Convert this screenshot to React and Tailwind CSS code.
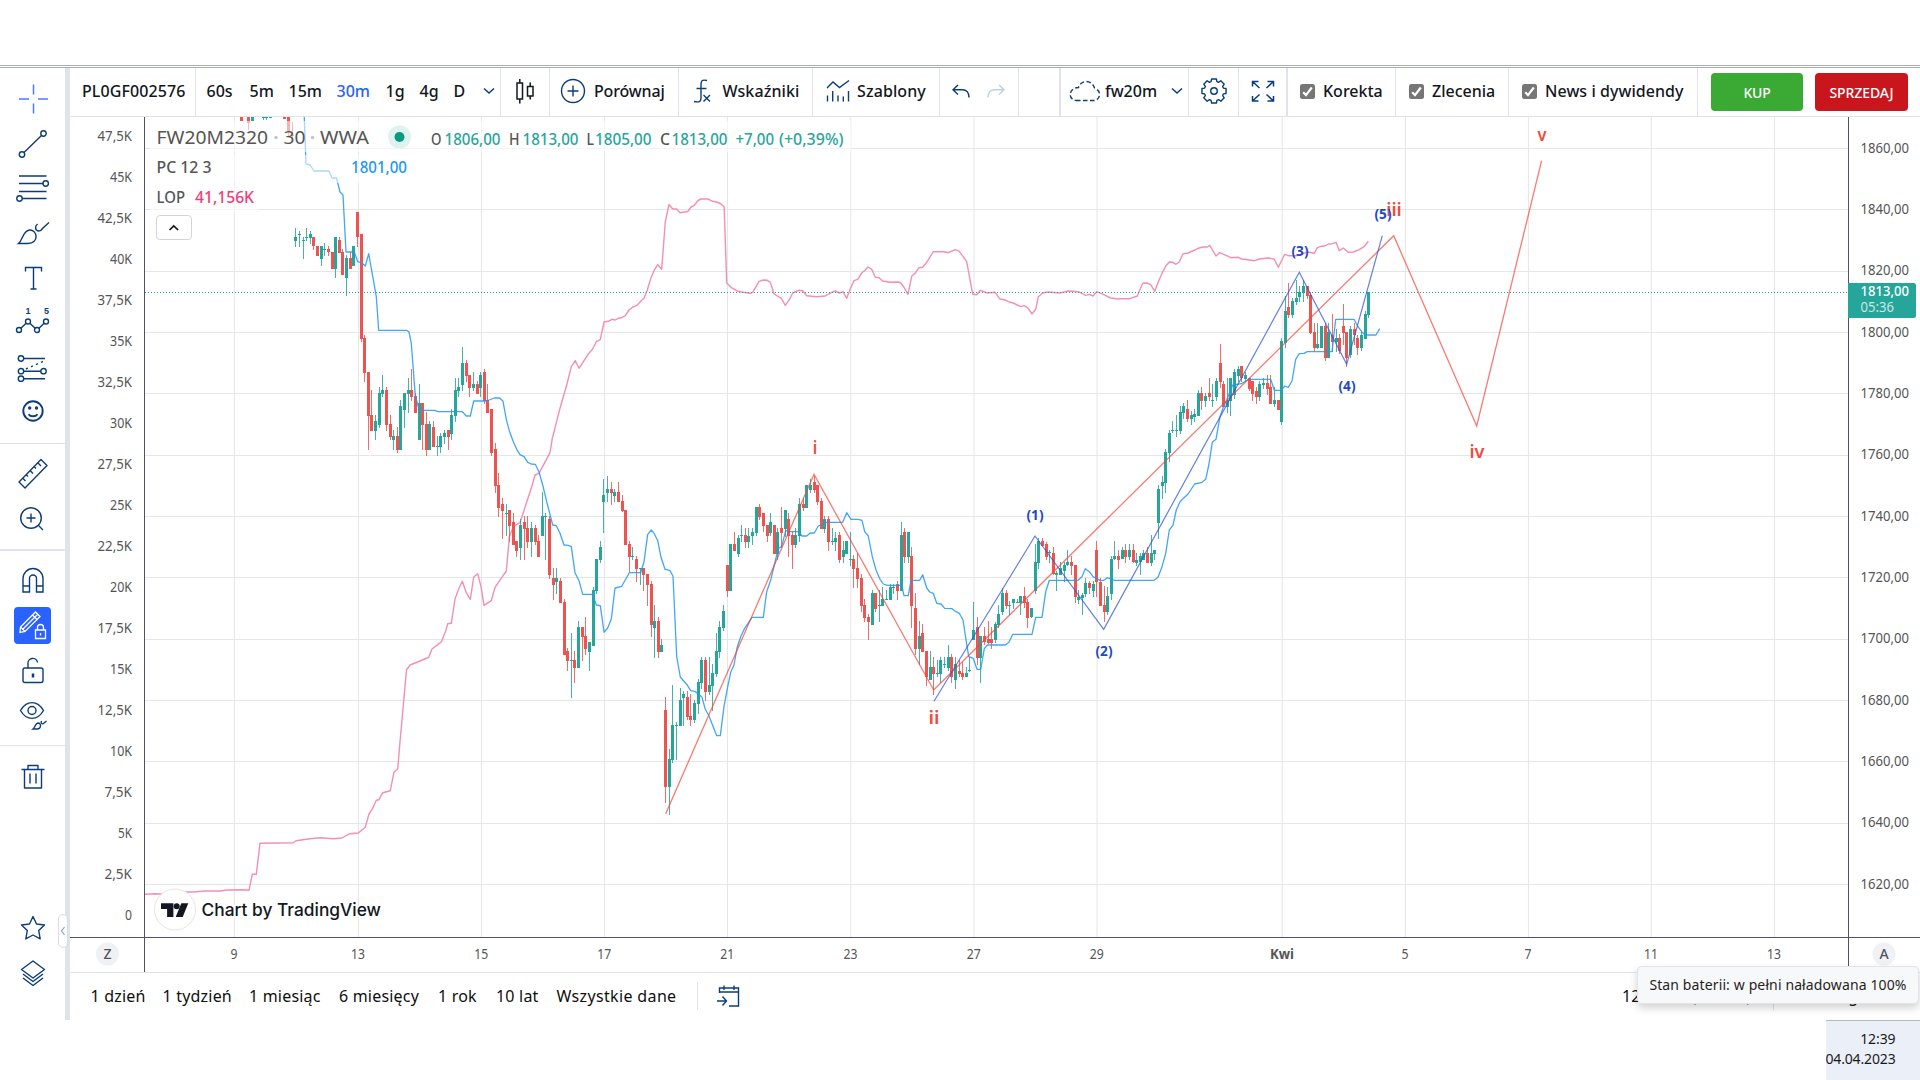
import { clsx } from "clsx";

const NAVY = "#0b3d7a";
const UP = "#26a69a";
const DOWN = "#ef5350";

// ---------- market data ----------
// Each block: first bar index, top edge in px, then "high,open/close top,open/close bottom,low,direction"
// with the y values in thirds of a pixel below the top edge.
const BLOCKS = [
  { from: 17, top: 50, bars: "534,561,573,590,g 543,552,555,590,g 560,570,573,627,g 534,561,564,573,g 543,552,564,582,g 561,561,588,600,r 588,588,618,618,r 588,588,627,648,g 580,597,600,618,g 588,597,606,618,r 606,606,657,657,r 561,561,657,684,g 561,570,608,608,r 597,606,675,675,r 615,624,684,737,g 606,624,657,657,r 588,588,648,648,g 486,486,561,590,r 552,552,866,875,r" },
  { from: 36, top: 230, bars: "315,324,429,456,r 426,426,557,660,r 480,555,602,602,r 555,573,602,629,g 471,489,585,593,g 435,480,491,500,g 471,480,585,602,r 555,582,620,629,r 600,618,629,660,g 591,618,660,668,r 510,528,660,660,g 489,489,540,593,g 444,480,491,549,g 417,480,500,513,r 489,498,549,549,r 462,519,629,629,g 519,519,585,660,r 546,582,660,678,r 573,582,660,660,g 573,591,650,650,r 618,648,651,678,g 609,618,650,668,g 600,609,620,642,g 600,600,620,660,r 537,555,611,629,g 444,480,557,575,g 444,471,482,500,g 351,399,465,482,g 390,399,438,456,r 435,435,474,500,r 426,462,474,482,g 453,462,491,491,r 426,435,474,500,g 417,426,513,522,r 462,510,549,549,r 537,537,669,678,r 639,657,768,789,r 729,765,834,861,r 804,822,843,927,r 822,849,852,918,g 840,840,888,936,r 849,876,945,945,r 933,933,963,981,r 867,885,954,990,g 858,876,897,990,r 858,894,936,954,r 876,894,936,981,g 885,894,936,945,r 915,933,981,981,r 786,858,918,918,g 849,858,861,990,g 858,867,1035,1047,r 1014,1044,1065,1110,r 1014,1044,1056,1092,g 1044,1053,1119,1119,r" },
  { from: 91, top: 440, bars: "477,487,645,645,r 624,633,663,693,r 579,660,663,774,g 633,660,684,729,r 543,561,684,684,g 561,561,591,663,r 531,588,627,645,r 606,606,636,693,g 441,450,618,618,g 357,357,453,462,g 303,321,360,370,g 117,165,186,279,g 108,147,159,186,g 126,147,159,195,r 147,156,168,186,g 126,156,186,186,r 165,183,213,216,r 210,210,315,315,r 303,312,351,396,r 321,348,351,360,g 348,357,387,426,r 384,384,387,435,g 384,384,405,453,r 402,402,435,498,r 423,432,555,591,r 495,543,564,654,g 531,543,636,654,r 597,615,636,636,g 771,810,1041,1089,r 927,957,1041,1125,g 735,855,960,969,g 846,855,858,960,g 744,780,858,858,g 753,762,774,858,g 753,771,831,840,r 762,828,840,858,r 780,789,840,849,g 717,726,792,822,g 651,660,729,747,g 651,660,756,783,r 651,735,756,765,g 672,699,738,813,g 579,633,702,711,g 543,561,636,654,g 495,513,564,573,g 375,375,453,471,r 312,312,453,453,g 276,312,333,333,r 285,294,342,351,g 255,285,288,306,g 264,285,306,324,r 264,288,306,324,g 264,276,288,315,g 201,201,279,288,g 192,201,231,240,r 219,219,258,276,r 255,255,288,306,r 219,246,279,288,g 255,255,342,342,r 264,276,342,360,g 201,264,279,324,r 210,210,267,291,g 219,237,288,351,r 276,285,315,387,r 264,285,315,324,g 174,192,288,306,g 174,192,204,213,r 135,135,204,204,g 117,135,150,159,g 108,126,150,159,r 135,135,186,195,r 174,183,267,267,r 228,237,267,279,g 228,237,306,333,r 264,303,306,315,g 276,294,306,333,g 276,285,360,369,r 303,330,351,369,g 303,303,342,342,g 276,357,360,378,g 345,357,387,444,r 339,384,417,444,r 402,414,498,516,r 477,495,534,546,r 522,531,546,600,r 450,459,555,555,g 459,459,507,516,r 450,495,498,546,g 441,477,498,498,g 450,477,480,480,g 432,441,480,480,g 432,441,444,462,g 423,432,453,480,r 246,285,453,453,g 264,276,351,369,r 276,276,351,369,g 321,348,498,564,r 459,504,627,645,r 543,588,627,675,g 552,579,636,636,r 633,633,711,738,r 633,681,720,720,g 651,681,702,765,r 660,699,702,711,g 651,660,702,729,g 651,672,675,684,g 615,651,684,693,g 642,651,711,729,r 651,672,720,747,g" },
  { from: 200, top: 460, bars: "600,633,642,651,r 605,640,651,660,r 620,640,651,651,g 590,630,633,635,g 426,510,540,540,g 471,501,594,614,r 528,528,594,669,g 501,528,545,555,r 483,537,548,552,r 501,537,549,567,r 486,492,540,549,g 435,462,495,504,g 384,399,456,465,g 390,399,438,447,r 423,435,438,465,g 417,417,429,447,g 417,426,429,429,g 408,408,429,465,g 381,408,429,445,r 417,426,474,504,r 444,444,471,474,g 252,306,393,402,g 234,243,309,327,g 234,243,258,258,r 246,252,291,300,r 270,276,280,309,g 261,279,342,345,r 333,340,344,393,g 306,324,345,345,g 306,315,333,366,g 270,306,315,318,g 288,306,318,345,r 315,315,411,429,r 390,411,420,432,g 399,405,414,465,g 354,369,402,411,g 363,369,384,402,r 363,372,393,411,g 243,270,366,411,r 354,366,438,438,r 378,435,456,486,r 381,408,456,465,g 288,297,402,420,g 243,288,297,300,g 270,288,300,327,r 261,270,297,297,g 252,270,291,309,r 252,270,291,300,g 252,270,306,309,r 279,300,309,318,g 279,288,306,345,g 270,279,300,300,g 261,279,309,309,r 225,279,309,318,g 270,270,282,300,g 75,87,189,237,g 48,66,78,117,g" },
  { from: 257, top: 200, bars: "747,756,849,879,g 690,699,759,786,g 663,690,693,699,g 645,690,693,711,g 618,636,693,702,g 609,618,639,657,g 600,627,657,666,r 633,645,657,675,g 627,642,651,666,g 570,579,648,648,g 561,579,603,630,r 579,588,603,621,g 534,579,591,603,r 552,600,603,621,g 534,543,591,603,g 432,489,546,564,r 543,552,621,621,r 534,600,621,639,g 534,534,603,648,g 507,516,585,597,g 498,507,528,546,g 498,498,534,546,r 516,525,537,546,g 534,534,567,573,r 543,543,582,603,r 561,573,591,612,r 543,552,591,603,g 534,549,555,567,g 525,549,567,585,r 525,561,612,612,r 561,600,612,621,g 600,600,630,630,r 414,423,666,675,g 288,333,429,444,g 249,321,345,354,r 294,303,345,354,g 240,294,306,315,g 258,276,291,306,g 240,258,279,306,g 258,258,288,297,r 276,285,399,402,r 369,396,444,453,r 369,432,444,447,g 378,378,444,444,g 369,378,474,483,r 369,396,474,474,g 342,405,426,456,r 387,414,426,456,g 402,414,453,462,r 312,378,399,435,r 396,396,474,501,r 378,387,465,474,g 369,387,405,435,r 405,414,444,465,r 396,405,444,453,g 333,342,417,417,g 276,276,345,354,g" },
];

// bars cut by the top edge of the pane
const CUT_BARS = [
  [2, 112, 112, 121, 121, "r"], [4, 112, 112, 123, 130, "r"], [5, 112, 112, 121, 121, "g"], [8, 112, 112, 118, 120, "g"],
  [9, 112, 112, 118, 120, "g"], [10, 112, 112, 118, 118, "g"], [14, 112, 112, 119, 119, "r"], [15, 112, 112, 131, 137, "r"], [16, 122, 135, 135, 137, "r"],
];

const BARS = [
  ...CUT_BARS,
  ...BLOCKS.flatMap(b =>
    b.bars.split(" ").map((row, i) => {
      const [h, t, bt, l, dir] = row.split(",");
      return [b.from + i, b.top + h / 3, b.top + t / 3, b.top + bt / 3, b.top + l / 3, dir];
    })
  ),
];

const line = (x0, y0, pts, k = 3) =>
  pts.split(" ").map(p => {
    const [x, y] = p.split(",");
    return `${(x0 + x / k).toFixed(1)},${(y0 + y / k).toFixed(1)}`;
  }).join(" ");

const CHANNEL = [
  line(0, 0, "304,110 306,164 310,165 314,171 329,171 332,178 336.5,178 338,184 340,192 343,195 346,252", 1),
  line(340, 230, "19,66 43,66 53,95 65,98 76,108 86,71 109,200 116,301 200,301 207,306 214,340 226,498 238,541 284,541 294,545 367,545 379,558 391,558 401,513 440,513 463,504 479,504 489,514 499,568 508,602 520,635 530,658 540,674 552,680 563,697 574,702 586,703 597,726 608,765 620,815 638,885 649,887 660,910 672,945 685,946 694,950 705,1028 717,1052 728,1093 758,1093 769,1125 781,1127 792,1206"),
  line(540, 440, "192,577 203,564 214,537 225,444 245,439 268,398 302,398 312,365 323,283 334,270 343,281 353,302 363,352 375,388 389,391 399,408 410,650 421,711 441,734 452,752 464,754 476,763 486,772 496,808 506,826 530,887 541,887 552,800 563,740 572,697 582,675 592,620 603,588 614,565 636,532 670,532 680,455 692,420 703,375 715,325 725,320 737,271 746,275 776,275 786,288 800,288 811,279 823,279 835,258 850,252 860,247 908,247 920,218 933,238 955,238 966,241 974,275 985,288 997,350 1008,390 1020,418 1030,432 1042,436 1085,436 1092,467 1105,467 1113,421 1139,421 1148,404 1160,444 1169,456 1180,460 1190,490 1203,492 1214,505 1236,506 1248,515 1258,520"),
  line(880, 460, "249,480 259,545 266,590 280,595 291,628 302,628 313,566 322,555 376,555 387,547 398,523 456,523 467,472 486,472 497,395 508,361 594,361 606,350 616,326 628,335 639,350 660,361 672,361 682,353 704,361 822,361 834,352 846,320 857,280 868,210"),
  line(1120, 200, "148,990 159,976 169,930 180,905 192,893 204,882 224,852 246,847 257,838 267,792 277,727 288,718 300,650 310,622 320,600 338,555 364,551 386,538 452,538 463,571 484,571 494,558 505,562 516,543 527,478 538,461 552,460 562,455 636,455 647,358 702,358 714,380 725,395 735,405 768,405 779,386"),
].join(" ");

const OPEN_INTEREST = [
  line(0, 560, "435,1003 465,1001 495,1003 560,996 580,996 615,993 660,993 680,990 730,989 747,991 757,943 769,943 780,850 880,848 888,842 930,836 960,833 1000,836 1025,834 1050,821 1075,819 1096,802 1107,762 1118,745 1129,721 1137,719 1148,698 1171,692 1182,636 1193,627 1200,545"),
  line(0, 0, "406.5,670 410,665 428.6,657.5 432,649 441.6,641.6", 1),
  line(340, 230, "318,1200 323,1181 334,1180 345,1107 356,1076 367,1054 379,1088 391,1108 401,1041 413,1031 423,1070 432,1126 454,1112 465,1072 499,1023 508,920 520,890 540,878 575,770 585,735 597,730 630,668 637,625 660,535 680,465 694,410 706,392 717,415 745,372 758,357 769,335 781,329 792,276 805,274 816,268 826,270 835,265 845,263 856,257 867,240 878,231 890,227 902,214 912,205 922,180 932,146 942,122 953,104 965,118"),
  line(0, 0, "665.3,221.7 669,204.5 672.7,209 676.7,209 680,212.7 687.8,211.5 691,207 694,205.5 698,200.5 701,199 708,199 712.6,201.3 716.7,202 721,204 724.2,207", 1),
  line(720, 235, "20,144 33,157 50,167 65,171 90,175 98,172 117,139 130,135 142,136 151,142 162,177 184,190 196,211 208,194 218,174 236,166 248,167 260,182 290,185 316,183 333,173 346,168 358,174 369,170 380,190 392,158 402,137 413,133 425,114 435,106 444,96 455,103 466,127 477,128 488,138 510,142 535,141 542,144 552,157 564,178 575,124 586,114 597,98 608,97 620,82 640,50 672,50 685,53 706,44 718,49 740,80 758,178 770,179 781,166 802,174 825,172 839,191 858,196 868,201 880,204 902,215 912,212 923,218 936,237 947,223 955,185 968,174 985,171 1020,174 1045,168 1075,170 1097,181 1108,178 1119,183 1130,170 1150,178 1172,189 1195,192"),
  line(1120, 200, "0,296 30,296 52,288 68,250 80,249 92,254 104,274 115,245 126,220 138,197 148,186 158,187 168,193 178,186 189,161 205,159 235,145 250,141 262,141 269,136 288,168 298,158 320,167 332,173 355,172 365,177 405,182 418,177 445,174 463,178 475,202 494,163 505,167 530,167 537,165 562,156 583,160 592,143 603,139 615,138 625,132 637,131 648,127 658,152 670,144 684,157 700,156 718,149 732,140 745,124"),
].join(" ");

const DATES = [
  [234.4, "9"], [358.4, "13"], [481.5, "15"], [604.6, "17"], [727.5, "21"], [850.8, "23"], [974, "27"], [1097, "29"],
  [1282.2, "Kwi"], [1405.4, "5"], [1528.4, "7"], [1651.3, "11"], [1774.4, "13"],
];
const PRICES = [1860, 1840, 1820, 1800, 1780, 1760, 1740, 1720, 1700, 1680, 1660, 1640, 1620];
const VOLUMES = ["47,5K", "45K", "42,5K", "40K", "37,5K", "35K", "32,5K", "30K", "27,5K", "25K", "22,5K", "20K", "17,5K", "15K", "12,5K", "10K", "7,5K", "5K", "2,5K", "0"];
const VOLUME_W = { 1: 7, 2: 14, 3: 22, 4: 27.5, 5: 34.5 };

const WAVES_RED = [[815, 454, "i", 4.5], [934, 724, "ii", 11], [1394, 215.5, "iii", 15.5], [1477, 458, "iv", 15], [1542, 140.5, "v", 9]];
const WAVES_BLUE = [[1035, 520, "(1)"], [1104, 656, "(2)"], [1300, 256, "(3)"], [1347, 391, "(4)"], [1383, 219, "(5)"]];

const LEGEND = [
  [156.5, 144, 111.5, "FW20M2320", "#555", 18.5], [283.5, 144, 22, "30", "#555", 18.5], [320, 144, 49, "WWA", "#555", 18.5],
  [431, 145, 10.5, "O", "#555", 15.5], [444.5, 145, 56, "1806,00", UP, 15.5],
  [509, 145, 10.5, "H", "#555", 15.5], [522.5, 145, 56, "1813,00", UP, 15.5],
  [586.5, 145, 7.5, "L", "#555", 15.5], [595, 145, 56.5, "1805,00", UP, 15.5],
  [660, 145, 10, "C", "#555", 15.5], [671.5, 145, 56, "1813,00", UP, 15.5],
  [735.5, 145, 38.5, "+7,00", UP, 15.5], [779, 145, 64.5, "(+0,39%)", UP, 15.5],
  [156.5, 173, 55, "PC 12 3", "#555", 15.5], [351, 173, 56, "1801,00", "#2196f3", 15.5],
  [156.5, 203, 28.5, "LOP", "#555", 15.5], [195, 203, 59, "41,156K", "#ec407a", 15.5],
];

const T = ({ w, children, ...rest }) => (
  <text textLength={w} lengthAdjust="spacingAndGlyphs" {...rest}>{children}</text>
);

const yOf = p => 148.5 + (1860 - p) * 3.0667;

function Chart() {
  return (
    <svg width="1850" height="855" viewBox="70 117 1850 855" className="block shrink-0 font-['Noto_Sans',sans-serif]">
      <g stroke="#e6e6e6">
        {DATES.map(([x]) => <line key={x} x1={x} x2={x} y1="117" y2="937" />)}
        {PRICES.map(p => <line key={p} y1={Math.floor(yOf(p)) + 0.5} y2={Math.floor(yOf(p)) + 0.5} x1="145" x2="1848" />)}
      </g>
      <polyline points={OPEN_INTEREST} fill="none" stroke="#f48fb1" strokeWidth="1.4" strokeLinejoin="round" />
      <g shapeRendering="crispEdges">
        {BARS.map(([i, h, t, b, l, dir]) => {
          const x = Math.floor(234.2 + i * 3.6245);
          const fill = dir === "g" ? UP : DOWN;
          return (
            <g key={i} fill={fill}>
              <rect x={x} y={Math.round(h)} width="1" height={Math.max(1, Math.round(l) - Math.round(h))} fillOpacity="0.85" />
              <rect x={x - 1} y={Math.round(t)} width="3" height={Math.max(1, Math.round(b) - Math.round(t))} />
            </g>
          );
        })}
      </g>
      <polyline points={CHANNEL} fill="none" stroke="#2196f3" strokeWidth="1.3" strokeOpacity="0.85" strokeLinejoin="round" />
      <line x1="145" x2="1848" y1="292.5" y2="292.5" stroke={UP} strokeDasharray="1 2" />

      <polyline points="665.7,813.7 814,474.3 933.7,690 1393.7,235.7 1476.7,426 1541.6,160.7" fill="none" stroke="#f44336" strokeOpacity="0.7" strokeWidth="1.3" />
      <polyline points="934,701.3 1035,536 1103.7,629.3 1299.3,272.3 1346.7,364.3 1382.3,235.7" fill="none" stroke="#2f55d4" strokeOpacity="0.75" strokeWidth="1.2" />
      <g fill="#f04a40" fontSize="18" fontWeight="600" textAnchor="middle">
        {WAVES_RED.map(([x, y, s, w]) => <T key={s} x={x} y={y} w={w}>{s}</T>)}
      </g>
      <g fill="#2148cc" fontSize="14" fontWeight="700" textAnchor="middle">
        {WAVES_BLUE.map(([x, y, s]) => <T key={s} x={x} y={y} w={17}>{s}</T>)}
      </g>

      {/* legend */}
      <g fill="#fff" fillOpacity="0.55">
        <rect x="150" y="121" width="701" height="31" />
        <rect x="150" y="155" width="264" height="28" />
        <rect x="150" y="185" width="108" height="28" />
      </g>
      {LEGEND.map(([x, y, w, s, c, size]) => (
        <T key={x + "-" + y} x={x} y={y} w={w} fill={c} fontSize={size} fontWeight={size > 16 ? 400 : 500}>{s}</T>
      ))}
      <circle cx="276" cy="137.5" r="1.7" fill="#c1c4cd" />
      <circle cx="312.5" cy="137.5" r="1.7" fill="#c1c4cd" />
      <circle cx="399.5" cy="137" r="11.5" fill="#dff2ef" />
      <circle cx="399.5" cy="137" r="5" fill="#089981" />
      <rect x="156.5" y="215.5" width="35" height="24" rx="3.5" fill="#fff" stroke="#d1d4dc" />
      <path d="M169.5 230l4.300 -4l4.300 4" fill="none" stroke="#131722" strokeWidth="1.7" />

      {/* attribution */}
      <circle cx="175" cy="909.5" r="20.5" fill="#fff" stroke="#e6e6e6" />
      <path d="M161 903.3h12.4v13.8h-6.3v-8h-6.1z M181.3 903.3h7l-5.6 13.8h-7z" fill="#131722" />
      <circle cx="176.7" cy="906.2" r="3" fill="#131722" />
      <T x="201.5" y="916.3" w="179.5" fontSize="17.5" fontWeight="500" fill="#131722" stroke="#fff" strokeWidth="3" paintOrder="stroke" className="font-[Inter,sans-serif]">Chart by TradingView</T>

      {/* axes */}
      <g stroke="#50535e" shapeRendering="crispEdges">
        <line x1="70" x2="1920" y1="937.5" y2="937.5" />
        <line x1="144.5" x2="144.5" y1="117" y2="972" />
        <line x1="1848.5" x2="1848.5" y1="117" y2="972" />
      </g>
      <g fill="#555" fontSize="14">
        {VOLUMES.map((v, i) => <T key={v} x="132" y={141 + i * 41} w={VOLUME_W[v.length]} textAnchor="end">{v}</T>)}
        {PRICES.map(p => <T key={p} x="1860.5" y={yOf(p) + 4} w="48.5">{p},00</T>)}
        {DATES.map(([x, s]) => (
          <T key={x} x={x - 0.3} y="959" textAnchor="middle" w={s.length === 3 ? 24 : s.length * 7} fontWeight={s.length === 3 ? 700 : 400}>{s}</T>
        ))}
      </g>
      <path d="M1848 283h65.500a2.500 2.500 0 0 1 2.500 2.500v30a2.500 2.500 0 0 1 -2.500 2.500h-65.500z" fill={UP} />
      <T x="1860.5" y="296.3" w="48.5" fontSize="14" fontWeight="500" fill="#fff">1813,00</T>
      <T x="1860.5" y="312.3" w="33.5" fontSize="14" fill="#fff" fillOpacity="0.75">05:36</T>
      <circle cx="107.5" cy="954" r="11.5" fill="#f0f1f5" />
      <circle cx="1884" cy="954" r="11.5" fill="#f0f1f5" />
      <g fill="#50535e" fontSize="14" fontWeight="500" textAnchor="middle">
        <text x="107.5" y="959">Z</text>
        <text x="1884" y="959">A</text>
      </g>
    </svg>
  );
}

// ---------- icons ----------
const Icon = ({ children, className, w = 36, h = 36, sw = 1.4, color = NAVY }) => (
  <svg width={w} height={h} viewBox={`${-w / 2} ${-h / 2} ${w} ${h}`} fill="none" stroke={color} strokeWidth={sw} className={clsx("shrink-0 overflow-visible", className)}>
    {children}
  </svg>
);

const Dot = ({ x, y, r = 2.7 }) => <circle cx={x} cy={y} r={r} fill="#fff" />;
const Chevron = ({ className }) => <Icon w={12} h={8} sw={1.5} className={className}><path d="M-5 -2.500 L0 2 L5 -2.500" /></Icon>;

const GEAR = Array.from({ length: 8 }, (_, i) => {
  const a = (i * Math.PI) / 4;
  return [[-0.3, 9.8], [-0.2, 12.3], [0.2, 12.3], [0.3, 9.8]].map(([d, r]) => `${(r * Math.sin(a + d)).toFixed(2)},${(-r * Math.cos(a + d)).toFixed(2)}`).join(" ");
}).join(" ");

const TOOLS_A = [
  <Icon color="#4d7bff" sw={1.5}><path d="M0.500 -14.500V-4.500M0.500 4.500V14.500M-14 0H-4M5 0H15" /></Icon>,
  <Icon><path d="M-9 8.500 L8.500 -8.500" /><Dot x={-11} y={10.5} /><Dot x={10.5} y={-10.5} /></Icon>,
  <Icon><path d="M-14 -12H13.500M-14 -4.500H12M-14 3.500H13.500M-12 10.500H13.500" /><Dot x={12.7} y={-4.5} /><Dot x={-13.5} y={10.5} /></Icon>,
  <Icon><path d="M-14.500 10.500C-10 7 -10.500 -2 -3.500 -3C4.500 -3.500 6.500 10.500 -5 10.500ZM4.500 -9C1.500 -6.500 2 -2 6 -2C8 -2 9 -3.500 10 -5L16 -10.500" /></Icon>,
  <Icon><path d="M-7.500 -6.500V-10.500H8.500V-6.500M0.500 -10.500V11M-2.500 11H3.500" /></Icon>,
  <Icon>
    <path d="M-14 8L-5 -0.500L4 8L13 -0.500" /><Dot x={-14} y={8} r={2.5} /><Dot x={-5} y={-0.5} r={2.5} /><Dot x={4} y={8} r={2.5} /><Dot x={13} y={-0.5} r={2.5} />
    <g fill={NAVY} stroke="none" fontSize="9" fontWeight="700" textAnchor="middle" className="font-['Liberation_Sans',sans-serif]"><text x="-5" y="-8">1</text><text x="13.5" y="-8">5</text></g>
  </Icon>,
  <Icon><path d="M-12 -8.500H12M-12 4.200H9M-12 11.700H12" /><path d="M-7 2L11 -6" strokeDasharray="2 3.5" /><Dot x={-12} y={-8.5} /><Dot x={-12} y={4.2} /><Dot x={10.5} y={4.2} /><Dot x={-12} y={11.7} /></Icon>,
  <Icon sw={1.9}><circle r="9.7" /><path d="M-4.500 3.200C-2.500 6 2.500 6 4.500 3.200" /><g fill={NAVY} stroke="none"><circle cx="-3.3" cy="-3" r="1.7" /><circle cx="3.5" cy="-3" r="1.7" /></g></Icon>,
];

const TOOLS_B = [
  <Icon><path d="M8 -14.500L14 -8.500L-8 14L-14 8ZM5 -11L8 -8M1 -7.500L3 -5.500M-3 -3.500L0 -0.500M-7 0.500L-5 2.500M-10.500 4L-7.500 7" strokeLinejoin="round" /></Icon>,
  <Icon><circle cx="-2" cy="-1" r="10.3" /><path d="M-6.500 -1H2.500M-2 -5.500V3.500M5 6L10 11" /></Icon>,
];

const TOOLS_C = [
  <Icon><path d="M-10 11V-2.500A10 10 0 0 1 10 -2.500V11H3.500V-2.500A3.500 3.500 0 0 0 -3.500 -2.500V11ZM-10 5H-3.500M3.500 5H10" /></Icon>,
  <span className="flex h-[37px] w-[37px] items-center justify-center rounded-[4px] bg-[#2962ff]">
    <Icon color="#fff" sw={1.3}>
      <path d="M-13 6.500L-12.500 1L2.500 -14L7 -9.500L-8 5.500ZM-0.500 -11L4 -6.500M-12.500 1L-8 5.500M-10 3L4.500 -11.500" />
      <path d="M2.500 4V12.500H12.500V4ZM4.500 4V1.500A3 3 0 0 1 10.500 1.500V4M7.500 7V9.500" />
    </Icon>
  </span>,
  <Icon><rect x="-10" y="-2" width="20" height="14.5" rx="2" /><path d="M-5 -2V-6A4.700 4.700 0 0 1 4.500 -7.500" /><path d="M0 3.500V7.500" strokeWidth="2.5" /></Icon>,
  <Icon><path d="M-12.500 -4.500C-6.500 -15 4.500 -15 10.500 -4.500C4.500 6 -6.500 6 -12.500 -4.500Z" /><circle cx="-1" cy="-4.5" r="4" /><path d="M0 14C2.500 12 2 8.500 5 8C8.500 8 8.500 14 4 14ZM8.500 6C7.500 8 9 9.500 10.500 8.500L13.500 6" /></Icon>,
];

const Trash = <Icon><path d="M-11.500 -7.500H11.500M-5 -7.500V-11.500H5V-7.500M-8.500 -7.500V11H8.500V-7.500M-3 -3.500V6.500M3 -3.500V6.500" strokeLinejoin="round" /></Icon>;
const Star = <Icon><path d="M0 -11.500L3.500 -4L11.500 -3L5.700 2.500L7.200 10.800L0 7L-7.200 10.800L-5.700 2.500L-11.500 -3L-3.500 -4Z" strokeLinejoin="round" /></Icon>;
const Layers = <Icon><path d="M0 -12L11.500 -3.500L0 5L-11.500 -3.500ZM-10 1L0 8.500L10 1M-10 5L0 12.500L10 5" strokeLinejoin="round" /></Icon>;

const Tool = ({ children }) => <button className="flex h-[44.6px] w-[65px] shrink-0 items-center justify-center">{children}</button>;

function Sidebar() {
  return (
    <aside className="flex w-[65px] shrink-0 flex-col bg-white pt-[9px]">
      {TOOLS_A.map((t, i) => <Tool key={i}>{t}</Tool>)}
      <div className="mt-[9px] mb-[8px] h-px bg-[#e0e3eb]" />
      {TOOLS_B.map((t, i) => <Tool key={i}>{t}</Tool>)}
      <div className="mt-[8px] mb-[8px] h-[2px] bg-[#e0e3eb]" />
      {TOOLS_C.map((t, i) => <Tool key={i}>{t}</Tool>)}
      <div className="mt-[8px] mb-[8px] h-px bg-[#e0e3eb]" />
      <Tool>{Trash}</Tool>
      <div className="mt-auto mb-[25px]">
        <Tool>{Star}</Tool>
        <Tool>{Layers}</Tool>
      </div>
    </aside>
  );
}

const Cell = ({ className, children }) => (
  <div className={clsx("flex h-full shrink-0 items-center border-r border-[#e0e3eb] pb-[2px] whitespace-nowrap", className)}>{children}</div>
);

const Check = ({ className, label }) => (
  <label className={clsx("flex items-center", className)}>
    <span className="mr-[8px] flex h-[15px] w-[15px] items-center justify-center rounded-[2.5px] bg-[#767676]">
      <Icon w={13} h={13} color="#fff" sw={2.2}><path d="M-4.300 0.800L-1.500 3.600L4.300 -4" /></Icon>
    </span>
    {label}
  </label>
);

function TopBar() {
  return (
    <header className="flex h-[49px] shrink-0 items-center border-b border-[#e0e3eb] text-[16px] font-medium text-[#131722]">
      <Cell className="w-[126px] pl-[12px]"><span className="w-[102.5px] overflow-hidden tracking-[0.1px]">PL0GF002576</span></Cell>
      <Cell className="w-[305px] pl-[10.5px]">
        <span className="w-[43px]">60s</span>
        <span className="w-[39px]">5m</span>
        <span className="w-[48px]">15m</span>
        <span className="w-[49px] text-[#2962ff]">30m</span>
        <span className="w-[34px]">1g</span>
        <span className="w-[34px]">4g</span>
        <span className="w-[29px]">D</span>
        <Chevron />
      </Cell>
      <Cell className="w-[49px] justify-center">
        <Icon w={20} h={28} color="#131722" sw={1.5}><path d="M-8 -8H-2.500V8H-8ZM-5.200 -12V-8M-5.200 8V12.500M2.500 -4.500H8V5H2.500ZM5.200 -8.500V-4.500M5.200 5V8.500" /></Icon>
      </Cell>
      <Cell className="w-[129px] pl-[10px]">
        <Icon w={26} h={26}><circle r="11.5" /><path d="M-5.500 0H5.500M0 -5.500V5.500" /></Icon>
        <span className="ml-[8px] tracking-[-0.15px]">Porównaj</span>
      </Cell>
      <Cell className="w-[134px] pl-[14px]">
        <Icon w={18} h={26}><path d="M5 -10.500C-1 -12 -1 -9 -1 -6V7C-1 11 -3 11.500 -8 10.500M-5.500 -2.500H4.500M1.500 4L8 10.500M8 4L1.500 10.500" /></Icon>
        <span className="ml-[11.5px] tracking-[0.1px]">Wskaźniki</span>
      </Cell>
      <Cell className="w-[127px] pl-[12.5px]">
        <Icon w={24} h={26}><path d="M-11 -3L-5 -9L1.500 -3.500L11 -10.500M-10.500 4.500V10.500M-5.300 0V10.500M0 4.500V10.500M5.300 5.500V10.500M10.500 0V10.500" /></Icon>
        <span className="ml-[7.5px] tracking-[0.1px]">Szablony</span>
      </Cell>
      <Cell className="w-[79px] pl-[12px]">
        <Icon w={18} h={18}><path d="M-3 -6L-8 -1.200L-3 3.500M-8 -1.200H1.500C5.500 -1.200 8 1.500 8 6.500" /></Icon>
        <Icon w={18} h={18} color="#c2cfdd" className="ml-[17px]"><path d="M3 -6L8 -1.200L3 3.500M8 -1.200H-1.500C-5.500 -1.200 -8 1.500 -8 6.500" /></Icon>
      </Cell>
      <Cell className="w-[42px] border-r-2" />
      <Cell className="w-[128px] pl-[8px]">
        <Icon w={32} h={24}><path d="M-9 9.500H9C14 9.500 17 2 12 -1.500C11 -2 10 -2.500 9.500 -3C7 -11.500 -4 -11.500 -6.500 -3.500C-16 -3.500 -18 8 -9 9.500Z" strokeDasharray="4.5 2.5" /></Icon>
        <span className="ml-[4px] w-[66px]">fw20m</span>
        <Chevron />
      </Cell>
      <Cell className="w-[50px] justify-center">
        <Icon w={28} h={28}><polygon points={GEAR} strokeLinejoin="round" /><circle r="3.3" /></Icon>
      </Cell>
      <Cell className="w-[49px] justify-center border-r-2">
        <Icon w={24} h={24} sw={1.5}><path d="M-10.500 -4.500V-9.500H-4.500M-10.500 -9.500L-3.500 -3M10.500 -4.500V-9.500H4.500M10.500 -9.500L3.500 -3M-10.500 5V10H-4.500M-10.500 10L-3.500 3.500M10.500 5V10H4.500M10.500 10L3.500 3.500" /></Icon>
      </Cell>
      <Cell className="w-[108px] pl-[12px]"><Check label="Korekta" /></Cell>
      <Cell className="w-[113px] pl-[13px]"><Check label="Zlecenia" /></Cell>
      <Cell className="w-[189px] pl-[13px]"><Check label="News i dywidendy" className="tracking-[0.05px]" /></Cell>
      <button className="ml-[13px] h-[38px] w-[92px] shrink-0 rounded-[4px] bg-[#3aaa35] text-[14px] tracking-[-0.2px] text-white">KUP</button>
      <button className="ml-[12px] h-[38px] w-[93px] shrink-0 rounded-[4px] bg-[#c9161d] text-[14px] tracking-[-0.1px] text-white">SPRZEDAJ</button>
    </header>
  );
}

function BottomBar() {
  return (
    <footer className="flex h-[47px] shrink-0 items-center border-t border-[#e0e3eb] pl-[20.5px] text-[16px] tracking-[0.2px] whitespace-nowrap text-[#0f0f0f]">
      <span className="w-[72px]">1 dzień</span>
      <span className="w-[86.5px]">1 tydzień</span>
      <span className="w-[90px]">1 miesiąc</span>
      <span className="w-[99px]">6 miesięcy</span>
      <span className="w-[58px]">1 rok</span>
      <span className="w-[60.5px]">10 lat</span>
      <span className="w-[140px] tracking-[0.35px]">Wszystkie dane</span>
      <span className="h-[28px] w-px bg-[#e0e3eb]" />
      <Icon w={24} h={24} className="ml-[18px]"><path d="M-8.500 -3V-8H10.500V10H1M-8.500 -4H10.500M-4 -10.500V-6M6 -10.500V-6M-11 5H-2M-5.500 0.500L-1.500 5L-5.500 9.500" /></Icon>
      <span className="ml-auto w-[151px]">12:39:24 (UTC+2)</span>
      <span className="h-[28px] w-px bg-[#e0e3eb]" />
      <span className="w-[60px] pl-[24px] text-[#2962ff]">%</span>
      <span className="w-[37px]">log</span>
      <span className="w-[49px]">auto</span>
    </footer>
  );
}

export default function App() {
  return (
    <div className="relative flex h-[1080px] w-[1920px] flex-col overflow-hidden bg-white pt-[65px] font-['Noto_Sans',sans-serif]">
      <div className="h-[3px] shrink-0 border-y border-[#a9aeac]" />
      <div className="flex h-[952px] shrink-0">
        <Sidebar />
        <div className="relative w-[5px] shrink-0 bg-[#e0e3eb]">
          <div className="absolute top-[846px] -left-[7px] flex h-[34px] w-[10px] items-center justify-center rounded-[5px] border border-[#d9dce6] bg-white">
            <Icon w={6} h={10} color="#8aa0b8" sw={1.2}><path d="M1.500 -4L-1.500 0L1.500 4" /></Icon>
          </div>
        </div>
        <main className="flex w-[1850px] shrink-0 flex-col">
          <TopBar />
          <Chart />
          <BottomBar />
        </main>
      </div>
      <div className="flex h-[60px] w-[94px] flex-col self-end border-t border-[#b5b9bf] bg-[#ebeff8] pt-[8px] pr-[24.5px] text-right text-[14px] leading-[20px] whitespace-nowrap text-[#1a1a1a]">
        <span className="tracking-[-0.1px]">12:39</span>
        <span className="flex justify-end overflow-hidden tracking-[-0.15px]">04.04.2023</span>
      </div>
      <div className="absolute top-[966px] left-[1637px] flex h-[38px] w-[282px] items-center justify-center rounded-[5px] border border-[#e3e4e6] bg-[#f7f8f9] pb-[2px] text-[14px] tracking-[0.12px] whitespace-nowrap text-[#1f1f1f] shadow-[0_4px_8px_rgba(0,0,0,0.18)]">
        Stan baterii: w pełni naładowana 100%
      </div>
    </div>
  );
}
